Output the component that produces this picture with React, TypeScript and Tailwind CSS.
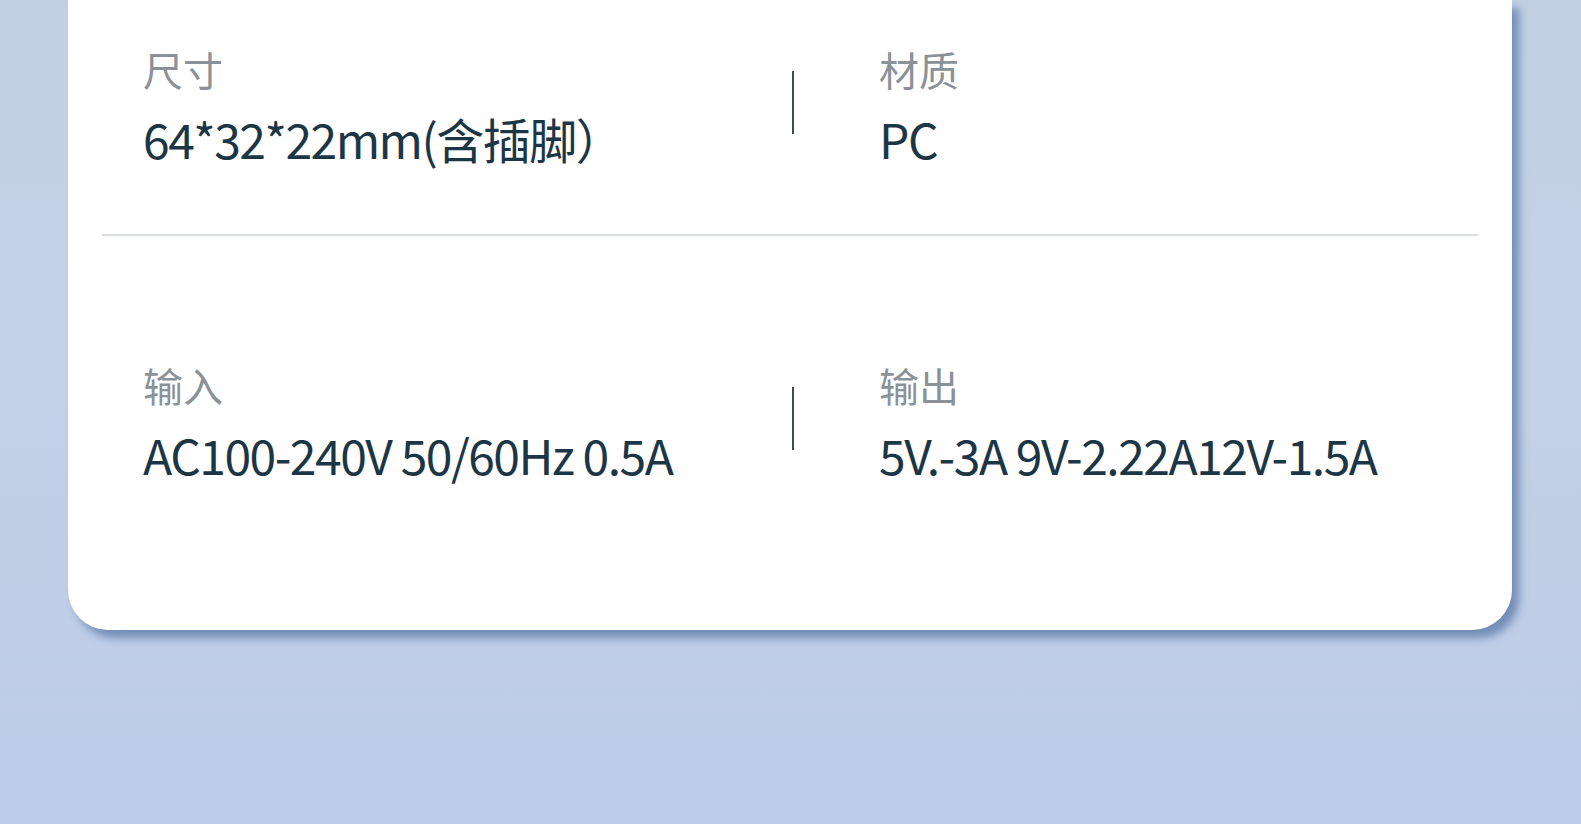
const font = { fontFamily: '"Noto Sans CJK SC", "Noto Sans", sans-serif' };

type Spec = { label: string; value: string };

function SpecCell({ label, value }: Spec) {
  return (
    <div className="flex flex-col">
      <span className="text-[40px] leading-none text-[#8a9197]">{label}</span>
      <span className="mt-[25px] text-[48px] leading-none tracking-[-1.5px] text-[#1d3646]">{value}</span>
    </div>
  );
}

function SpecRow({ left, right }: { left: Spec; right: Spec }) {
  return (
    <div className="flex pl-[75px]">
      <div className="w-[649px]">
        <SpecCell {...left} />
      </div>
      <div className="mt-[22px] h-[63px] w-[2px] bg-[#3b4c58]" />
      <div className="ml-[85px]">
        <SpecCell {...right} />
      </div>
    </div>
  );
}

export default function App() {
  return (
    <div
      className="h-[824px] w-[1581px] overflow-hidden bg-gradient-to-b from-[#c2d0e3] via-[#c3d0e6] to-[#bccbe8]"
      style={font}
    >
      <div className="ml-[68px] flex h-[630px] w-[1444px] flex-col rounded-b-[40px] bg-white shadow-[7px_8px_9px_rgba(95,125,170,0.8)]">
        <div className="h-[234px] pt-[49px]">
          <SpecRow
            left={{ label: "尺寸", value: "64*32*22mm(含插脚）" }}
            right={{ label: "材质", value: "PC" }}
          />
        </div>
        <div className="mx-[34px] h-[2px] bg-[#dadddf]" />
        <div className="pt-[129px]">
          <SpecRow
            left={{ label: "输入", value: "AC100-240V 50/60Hz 0.5A" }}
            right={{ label: "输出", value: "5V.-3A 9V-2.22A12V-1.5A" }}
          />
        </div>
      </div>
    </div>
  );
}
